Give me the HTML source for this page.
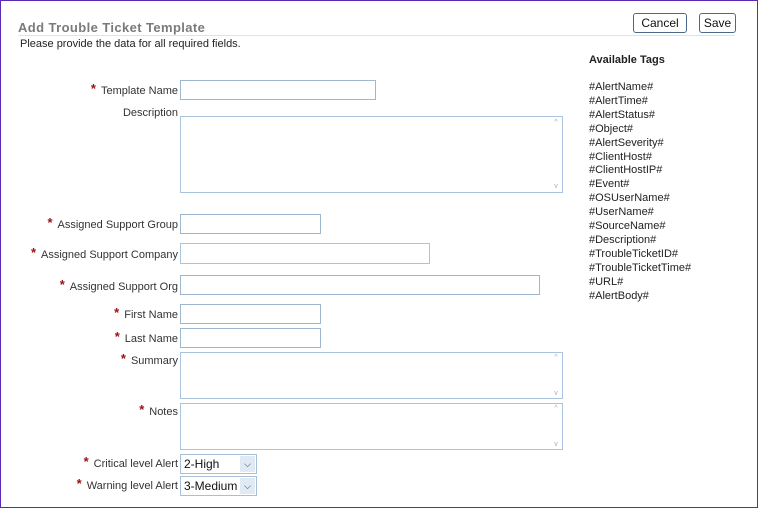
<!DOCTYPE html>
<html><head><style>
body{margin:0;width:758px;height:508px;overflow:hidden;background:#fff;font-family:"Liberation Sans",Arial,sans-serif;}
#f{position:absolute;left:0;top:0;width:756px;height:506px;border:1px solid #5b2bb5;}
.a{position:absolute;}
.t{position:absolute;left:18px;top:20px;font-size:13px;font-weight:bold;color:#7a7a7a;letter-spacing:0.4px;}
.line{position:absolute;left:18px;top:35px;width:717px;height:1px;background:#dde3ea;}
.sub{position:absolute;left:20px;top:38px;font-size:11px;color:#222;}
.btn{position:absolute;top:13px;height:18px;border:1px solid #4a6a8a;border-radius:3px;font-size:12px;line-height:18px;text-align:center;color:#111;background:#fff;}
.lab{position:absolute;right:580px;font-size:11px;color:#333;white-space:nowrap;line-height:13px;}
.lab b{color:#9b1010;font-size:13px;margin-right:5px;line-height:0;vertical-align:top;position:relative;top:4px;}
.in{position:absolute;left:180px;border:1px solid #9fb8d0;background:#fff;box-sizing:border-box;}
.ta{border-color:#a9c4dc;}
.sel{position:absolute;left:180px;width:77px;height:20px;border:1px solid #a7c0d8;box-sizing:border-box;font-size:12px;line-height:18px;padding-left:3px;color:#111;}
.sel i{position:absolute;right:1px;top:1px;width:15px;height:16px;background:#dfeaf5;font-style:normal;font-size:9px;text-align:center;line-height:16px;color:#234;}
.tags{position:absolute;left:589px;top:81px;font-size:11px;line-height:13.9px;color:#222;}
.sb{position:absolute;right:1px;width:10px;font-size:7px;color:#aab;text-align:center;}
</style></head><body><div id="f"></div>
<div class="t">Add Trouble Ticket Template</div>
<div class="line"></div>
<div class="sub">Please provide the data for all required fields.</div>
<div class="btn" style="left:633px;width:52px">Cancel</div>
<div class="btn" style="left:699px;width:35px">Save</div>
<div class="a" style="left:589px;top:54px;font-size:11px;font-weight:bold;color:#222">Available Tags</div>
<div class="tags">#AlertName#<br>#AlertTime#<br>#AlertStatus#<br>#Object#<br>#AlertSeverity#<br>#ClientHost#<br>#ClientHostIP#<br>#Event#<br>#OSUserName#<br>#UserName#<br>#SourceName#<br>#Description#<br>#TroubleTicketID#<br>#TroubleTicketTime#<br>#URL#<br>#AlertBody#</div>

<div class="lab" style="top:85px"><b>*</b>Template Name</div>
<div class="in" style="top:80px;width:196px;height:20px"></div>
<div class="lab" style="top:107px">Description</div>
<div class="in ta" style="top:116px;width:383px;height:77px"><div class="sb" style="top:2px">^</div><div class="sb" style="bottom:2px">v</div></div>
<div class="lab" style="top:219px"><b>*</b>Assigned Support Group</div>
<div class="in" style="top:214px;width:141px;height:20px"></div>
<div class="lab" style="top:249px"><b>*</b>Assigned Support Company</div>
<div class="in ta" style="top:243px;width:250px;height:21px"></div>
<div class="lab" style="top:281px"><b>*</b>Assigned Support Org</div>
<div class="in" style="top:275px;width:360px;height:20px"></div>
<div class="lab" style="top:309px"><b>*</b>First Name</div>
<div class="in" style="top:304px;width:141px;height:20px"></div>
<div class="lab" style="top:333px"><b>*</b>Last Name</div>
<div class="in" style="top:328px;width:141px;height:20px"></div>
<div class="lab" style="top:355px"><b>*</b>Summary</div>
<div class="in ta" style="top:352px;width:383px;height:47px"><div class="sb" style="top:1px">^</div><div class="sb" style="bottom:1px">v</div></div>
<div class="lab" style="top:406px"><b>*</b>Notes</div>
<div class="in ta" style="top:403px;width:383px;height:47px"><div class="sb" style="top:1px">^</div><div class="sb" style="bottom:1px">v</div></div>
<div class="lab" style="top:458px"><b>*</b>Critical level Alert</div>
<div class="sel" style="top:454px">2-High<i>&#x2335;</i></div>
<div class="lab" style="top:480px"><b>*</b>Warning level Alert</div>
<div class="sel" style="top:476px">3-Medium<i>&#x2335;</i></div>
</body></html>
